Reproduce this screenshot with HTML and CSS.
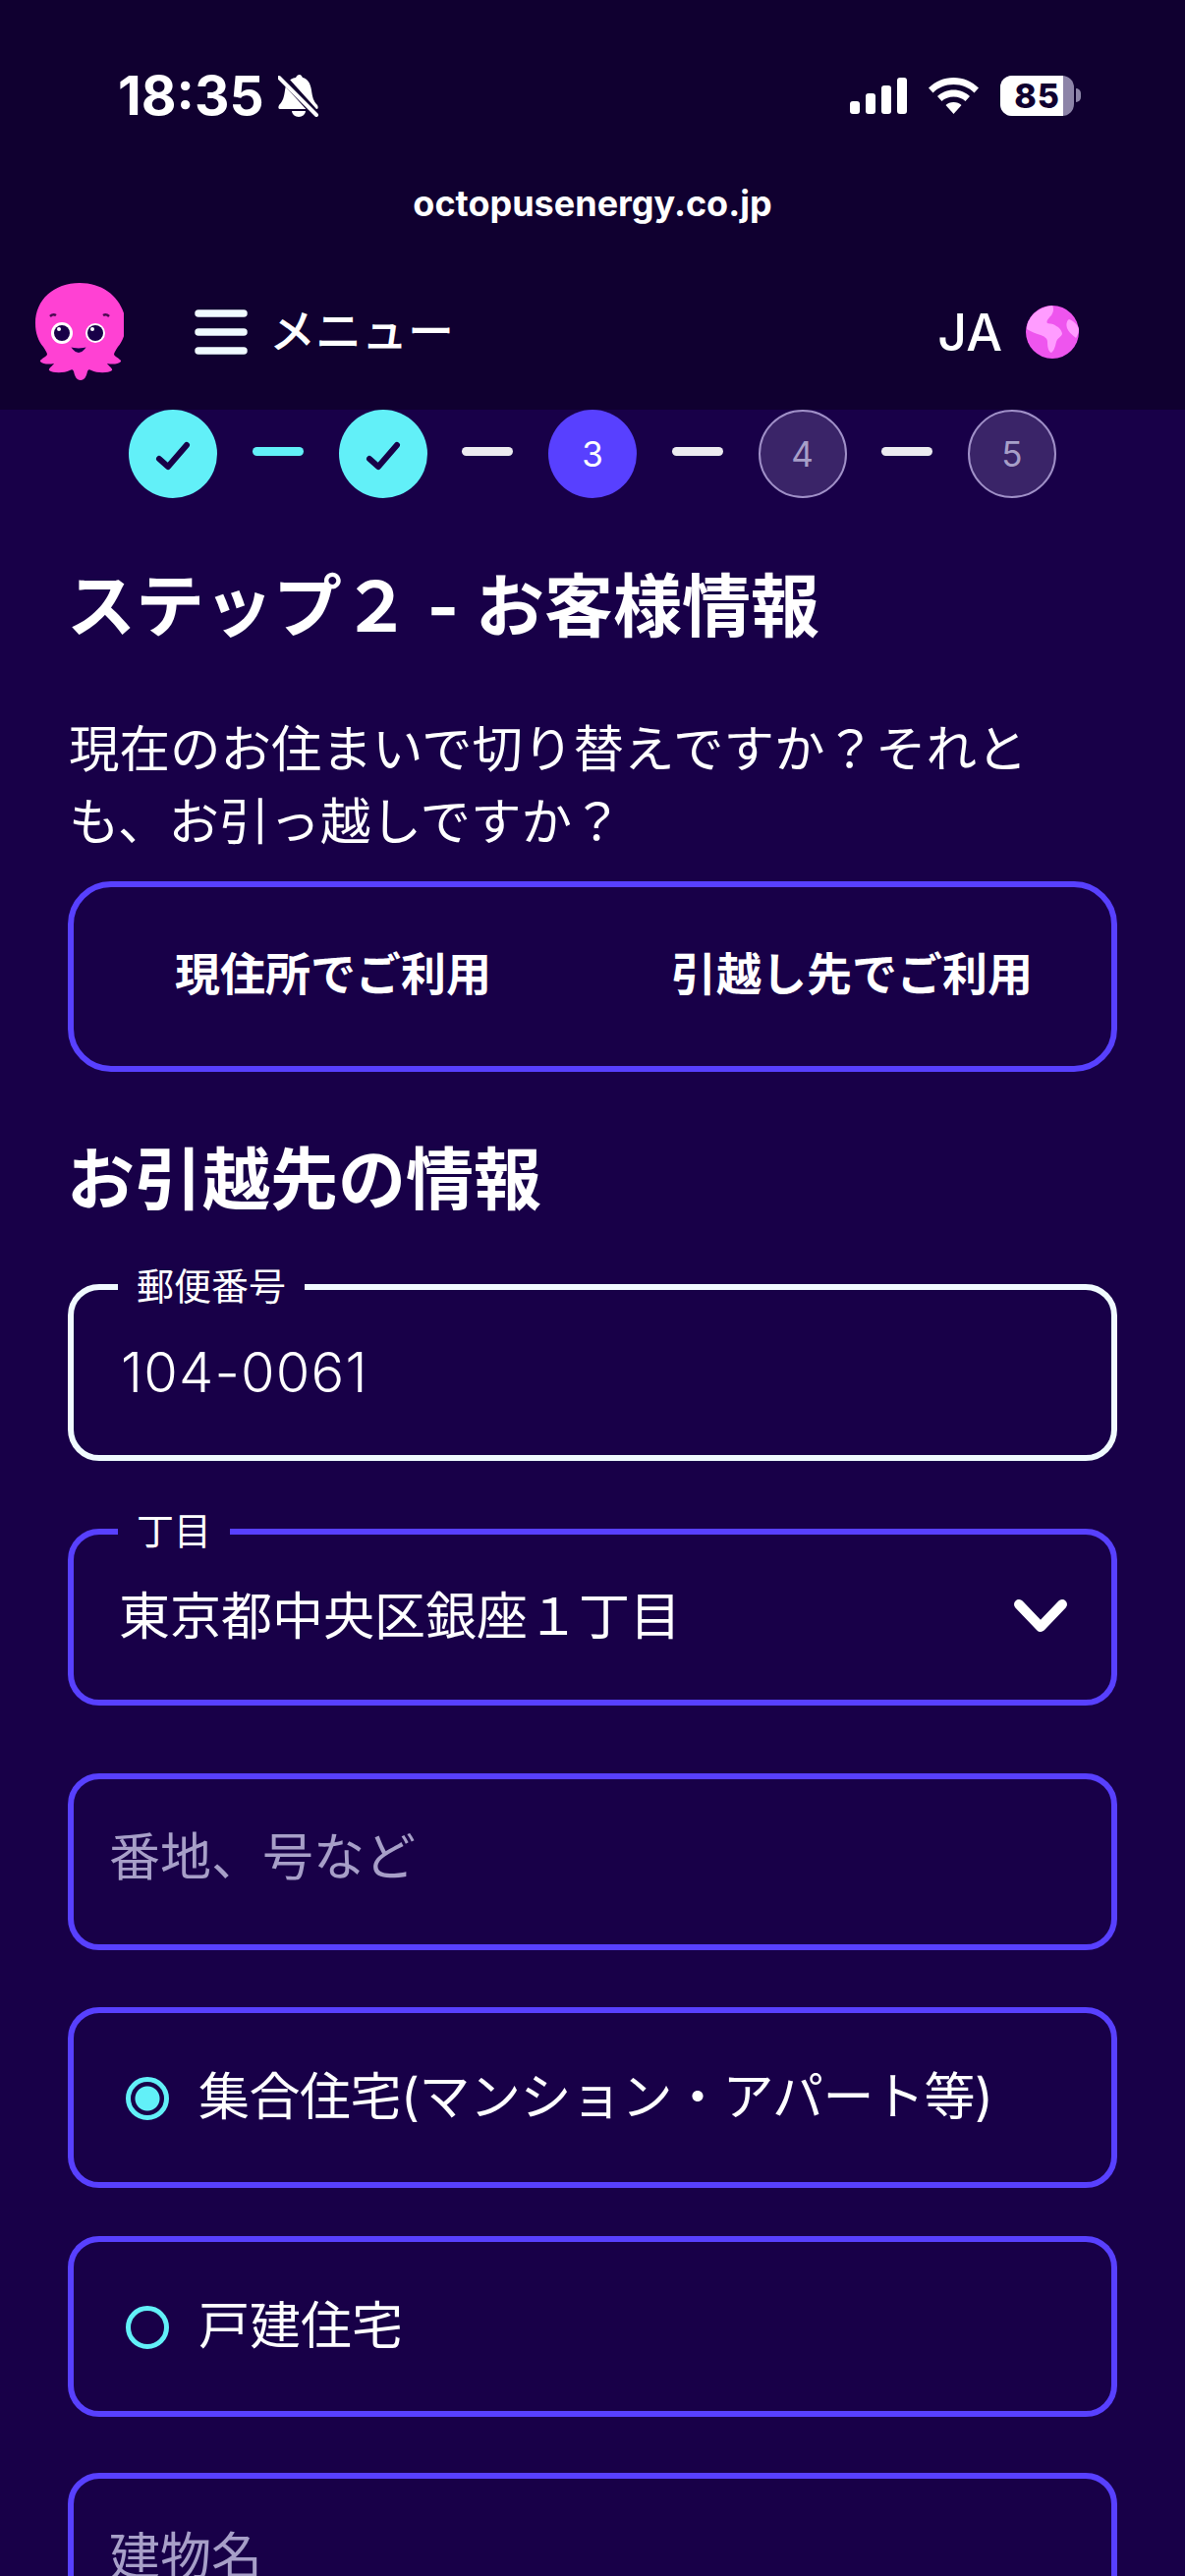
FILE: index.html
```html
<!DOCTYPE html>
<html lang="ja">
<head>
    <meta charset="UTF-8">
    <title>octopusenergy.co.jp</title>
    <link rel="stylesheet" href="styles.css">
</head>
<body>
    <div class="phone-top">
        <div class="status">
            <div class="status-left">
                <span class="time">18:35</span>
                <svg class="bell" width="42" height="43" viewBox="0 0 42 43"><path d="M22 0c-2 0-3 1-4 3C11 4 8 9 7 16c-1 7-2 11-6 15-1 2-1 4 1 4h37c2 0 2-2 1-4-4-4-5-8-6-15-1-7-4-12-9-13-1-2-2-3-3-3z" fill="#fff"/><path d="M14 37a7 6 0 0 0 14 0z" fill="#fff"/><path d="M2 0l38 42" stroke="#100030" stroke-width="8"/><path d="M1 3l38 38" stroke="#fff" stroke-width="4" stroke-linecap="round"/></svg>
            </div>
            <div class="status-right">
                <svg width="58" height="37" viewBox="0 0 58 37"><rect x="0" y="24" width="10" height="13" rx="3" fill="#fff"/><rect x="16" y="16" width="10" height="21" rx="3" fill="#fff"/><rect x="32" y="8" width="10" height="29" rx="3" fill="#fff"/><rect x="48" y="0" width="10" height="37" rx="3" fill="#fff"/></svg>
                <svg width="51" height="37" viewBox="0 0 51 37"><path d="M25.500 0C15.500 0 7 4 0 10.500l4.500 5C10 10 17 7 25.500 7S41 10 46.500 15.500l4.500-5C44 4 35.500 0 25.500 0z" fill="#fff"/><path d="M25.500 12.500c-6.500 0-12 2.500-16.500 6.500l4.500 5c3-2.800 7.300-4.500 12-4.500s9 1.700 12 4.500l4.500-5c-4.500-4-10-6.500-16.500-6.500z" fill="#fff"/><path d="M25.500 25c-3.300 0-6 1-8 3l8 9 8-9c-2-2-4.700-3-8-3z" fill="#fff"/></svg>
                <div class="battery-wrap">
                    <div class="battery"><div class="battery-fill"></div><span class="battery-num">85</span></div>
                    <div class="battery-nub"></div>
                </div>
            </div>
        </div>
        <div class="url">octopusenergy.co.jp</div>
        <div class="site-nav">
            <div class="nav-left">
                <svg class="logo" width="90" height="100" viewBox="0 0 90 100">
                    <path d="M45 0C19 0 0 17 0 41c0 10 3 18 8 24 2 3 4 6 4 8-2 3-8 5-7 7 3 3 9 3 14 2-2 3-6 5-5 7 4 3 15 3 21 0 2-1 3-1 4 1 1 5 3 9 7 9s6-4 7-9c1-2 2-2 4-1 6 3 17 3 21 0 1-2-3-4-5-7 5 1 11 1 14-2 1-2-5-4-7-7 0-2 2-5 4-8 5-6 8-14 8-24C90 17 71 0 45 0z" fill="#ff41d3"/>
                    <path d="M15 34q3-3 6-1" stroke="#4a0a50" stroke-width="2.500" fill="none"/><path d="M69 33q3-2 6 1" stroke="#4a0a50" stroke-width="2.500" fill="none"/>
                    <circle cx="27" cy="51" r="11" fill="#fff"/><circle cx="61" cy="51" r="10" fill="#fff"/>
                    <circle cx="27" cy="51" r="8" fill="#180048"/><circle cx="61" cy="51" r="8" fill="#180048"/>
                    <circle cx="24" cy="47" r="2" fill="#fff"/><circle cx="58" cy="47" r="2" fill="#fff"/>
                    <path d="M39 67q5 6 10 0q-5 1-10 0z" fill="#180048" stroke="#180048" stroke-width="2"/>
                </svg>
                <div class="menu">
                    <svg width="54" height="46" viewBox="0 0 54 46"><path d="M4 4h46M4 23h46M4 42h46" stroke="#f0faff" stroke-width="7.500" stroke-linecap="round"/></svg>
                    <span>メニュー</span>
                </div>
            </div>
            <div class="lang">
                <span>JA</span>
                <svg width="54" height="54" viewBox="0 0 54 54"><circle cx="27" cy="27" r="27" fill="#ee55ee"/><path d="M5 12C10 5 18 1 27 0c2 3 1 7-1 10-2 2-6 6-4 8 3 1 6 0 9 3 3 1 6 5 6 8-1 3-5 4-6 8-1 4-2 9-5 11-3-1-4-6-4-11 0-4-4-6-7-7-4-1-9-3-14-6 0-4 1-8 3-10z" fill="#ff9cff"/><path d="M44 14c-3 2-3 6-2 9 1 3 4 6 9 10 2-3 3-6 3-9-1-4-5-8-10-10z" fill="#ff9cff"/></svg>
            </div>
        </div>
    </div>

    <div class="stepper">
        <div class="step done"><svg class="check" width="40" height="34" viewBox="0 0 40 34"><path d="M6 19l9 8L34 5" stroke="#180048" stroke-width="6" fill="none" stroke-linecap="round" stroke-linejoin="round"/></svg></div>
        <div class="step-line cyan"></div>
        <div class="step done"><svg class="check" width="40" height="34" viewBox="0 0 40 34"><path d="M6 19l9 8L34 5" stroke="#180048" stroke-width="6" fill="none" stroke-linecap="round" stroke-linejoin="round"/></svg></div>
        <div class="step-line"></div>
        <div class="step current">3</div>
        <div class="step-line"></div>
        <div class="step todo">4</div>
        <div class="step-line"></div>
        <div class="step todo">5</div>
    </div>

    <main class="content">
        <h1>ステップ２ - お客様情報</h1>
        <p class="question">現在のお住まいで切り替えですか？それとも、お引っ越しですか？</p>
        <div class="toggle">
            <span>現住所でご利用</span>
            <span>引越し先でご利用</span>
        </div>
        <h2>お引越先の情報</h2>

        <div class="field zip">
            <span class="legend">郵便番号</span>
            <span class="zip-value">104-0061</span>
        </div>
        <div class="field chome">
            <span class="legend">丁目</span>
            <span class="value">東京都中央区銀座１丁目</span>
            <svg class="chevron" width="54" height="33" viewBox="0 0 54 33"><path d="M5 5l22 23L49 5" stroke="#fff" stroke-width="10" fill="none" stroke-linecap="round" stroke-linejoin="round"/></svg>
        </div>
        <div class="field address">
            <span class="placeholder">番地、号など</span>
        </div>
        <div class="field radio-row first">
            <span class="radio on"></span>
            <span class="value">集合住宅(マンション・アパート等)</span>
        </div>
        <div class="field radio-row second">
            <span class="radio"></span>
            <span class="value">戸建住宅</span>
        </div>
        <div class="field building">
            <span class="placeholder">建物名</span>
        </div>
    </main>
</body>
</html>
```

FILE: styles.css
```css
html, body {
    margin: 0;
    height: 2622px;
    overflow: hidden;
}
body {
    background-color: #180048;
    color: #fff;
    font-family: "Inter", "Noto Sans CJK JP", sans-serif;
}
.phone-top {
    height: 417px;
    background-color: #100030;
    display: flex;
    flex-direction: column;
}
.status {
    display: flex;
    justify-content: space-between;
    align-items: center;
    height: 46px;
    padding: 74px 106px 0 120px;
}
.status-left, .status-right {
    display: flex;
    align-items: center;
    gap: 14px;
}
.status-right {
    gap: 22px;
}
.time {
    font-size: 55px;
    font-weight: 700;
    line-height: 46px;
}
.battery-wrap {
    display: flex;
    align-items: center;
    gap: 2px;
}
.battery {
    position: relative;
    width: 75px;
    height: 41px;
    border-radius: 12px;
    background-color: #8d84a8;
    overflow: hidden;
}
.battery-fill {
    width: 85%;
    height: 100%;
    background-color: #fff;
}
.battery-num {
    position: absolute;
    left: 0;
    right: 0;
    top: 0;
    text-align: center;
    line-height: 41px;
    font-size: 34px;
    font-weight: 800;
    letter-spacing: 1px;
    color: #100030;
}
.battery-nub {
    width: 5px;
    height: 14px;
    border-radius: 0 5px 5px 0;
    background-color: #8d84a8;
}
.url {
    margin-top: 65px;
    line-height: 44px;
    text-align: center;
    font-size: 36px;
    font-weight: 700;
}
.site-nav {
    display: flex;
    justify-content: space-between;
    align-items: center;
    margin-top: 59px;
    padding: 0 108px 0 36px;
}
.nav-left, .menu, .lang {
    display: flex;
    align-items: center;
}
.menu {
    margin-left: 72px;
    gap: 22px;
    font-size: 47px;
    font-weight: 500;
}
.menu span {
    padding-bottom: 10px;
}
.lang {
    gap: 24px;
    font-size: 52px;
    font-weight: 500;
}
.stepper {
    display: flex;
    justify-content: center;
    align-items: center;
    gap: 35.75px;
    height: 90px;
}
.step {
    width: 90px;
    height: 90px;
    border-radius: 50%;
    box-sizing: border-box;
    display: flex;
    align-items: center;
    justify-content: center;
    font-size: 35px;
}
.done {
    background-color: #62f0f8;
}
.check {
    margin-top: 6px;
}
.current {
    background-color: #5840ff;
}
.todo {
    border: 2px solid #a090c8;
    background-color: #3a2468;
    color: #a79fc8;
}
.step-line {
    width: 52px;
    height: 9px;
    border-radius: 5px;
    background-color: #ecebf0;
    margin-top: -6px;
}
.step-line.cyan {
    background-color: #62f0f8;
}
.content {
    padding: 0 69px;
}
h1 {
    margin: 61px 0 0 -1px;
    font-size: 70px;
    line-height: 100px;
    font-weight: 700;
}
.question {
    margin: 57px 0 0 1px;
    font-size: 51.5px;
    line-height: 74px;
}
.toggle {
    box-sizing: border-box;
    height: 194px;
    margin-top: 24px;
    border: 6px solid #5840ff;
    border-radius: 44px;
    display: grid;
    grid-template-columns: 1fr 1fr;
    align-items: center;
    text-align: center;
    font-size: 46px;
    font-weight: 700;
}
.toggle span {
    padding-bottom: 12px;
}
h2 {
    margin: 65px 0 0 -1px;
    font-size: 69px;
    line-height: 90px;
    font-weight: 700;
}
.field {
    position: relative;
    box-sizing: border-box;
    height: 180px;
    border: 6px solid #5840ff;
    border-radius: 32px;
    display: flex;
    align-items: center;
    font-size: 52px;
}
.value {
    padding-bottom: 10px;
}
.zip {
    margin-top: 61px;
    border-color: #f0faff;
    padding-left: 48px;
}
.zip-value {
    font-size: 56px;
    font-weight: 300;
    letter-spacing: 1.2px;
}
.chome {
    margin-top: 69px;
    padding: 0 45px 0 46px;
    justify-content: space-between;
}
.chevron {
    margin-top: -3px;
}
.address {
    margin-top: 69px;
    padding: 0 0 18px 36px;
}
.legend {
    position: absolute;
    top: -26px;
    left: 45px;
    padding: 0 19px;
    background-color: #180048;
    font-size: 38px;
    line-height: 44px;
}
.placeholder {
    color: #a79fc8;
}
.radio-row {
    height: 184px;
    padding-left: 53px;
    gap: 30px;
}
.first {
    margin-top: 58px;
    letter-spacing: -0.5px;
}
.second {
    margin-top: 49px;
}
.radio {
    box-sizing: border-box;
    width: 44px;
    height: 44px;
    border: 5px solid #62f0f8;
    border-radius: 50%;
    flex: none;
    margin-top: 2px;
}
.radio.on {
    background: radial-gradient(circle, #62f0f8 0 12px, transparent 13px);
}
.building {
    margin-top: 57px;
    padding: 0 0 18px 36px;
}
```
